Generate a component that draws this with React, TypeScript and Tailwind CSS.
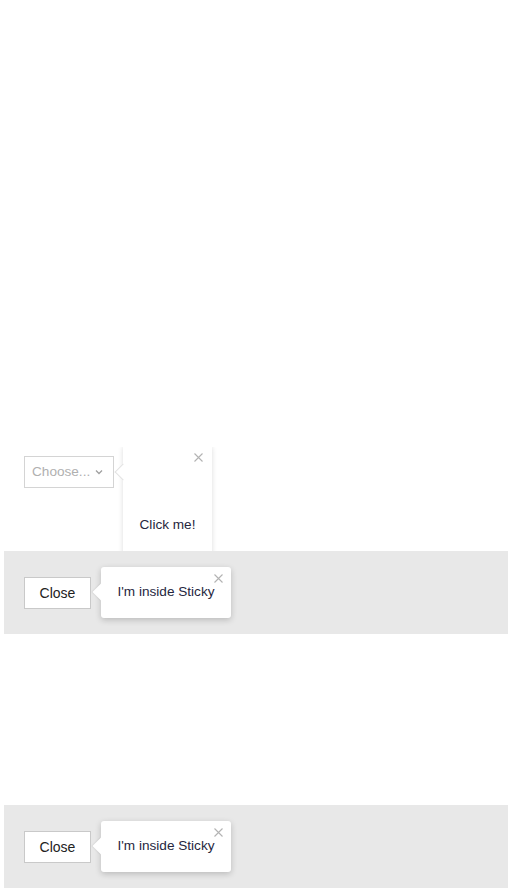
import React from 'react';

const font = { fontFamily: '"Liberation Sans", Arial, sans-serif' };

const CloseX: React.FC<{ className?: string }> = ({ className }) => (
  <svg className={className} width="9" height="9" viewBox="0 0 9 9" fill="none">
    <path d="M0.5 0.5L8.5 8.5M8.5 0.5L0.5 8.5" stroke="#b3b3b3" strokeWidth="1.1" />
  </svg>
);

const StickyBand: React.FC = () => (
  <div className="relative z-10 ml-[4px] h-[83px] bg-[#e8e8e8] flex items-start gap-[10px] pl-[20px]">
    <button className="mt-[26px] w-[67px] h-[32px] bg-white border border-[#c9c9c9] text-[14px] text-[#222]">
      Close
    </button>
    <div className="relative mt-[16px] w-[130px] h-[51px] bg-white rounded-[3px] shadow-[0_2px_6px_rgba(0,0,0,0.2)] flex items-center justify-center">
      <div className="absolute left-[-6px] top-[19px] w-[12px] h-[12px] bg-white rotate-45 shadow-[-1px_1px_1px_rgba(0,0,0,0.06)]" />
      <span className="relative text-[13.6px] text-[#262640]">I'm inside Sticky</span>
      <CloseX className="absolute right-[8px] top-[7px]" />
    </div>
  </div>
);

export default function App() {
  return (
    <div className="w-[508px] h-[892px] bg-white overflow-hidden" style={font}>
      <div className="h-[551px] flex items-end pl-[24px] pb-[63px]">
        <div className="relative">
          <div className="w-[90px] h-[32px] border border-[#d4d4d4] bg-white flex items-center pl-[7px] gap-[5px]">
            <span className="text-[13.6px] text-[#b0b0b0]">Choose...</span>
            <svg width="8" height="6" viewBox="0 0 8 6" fill="none">
              <path d="M1 1.5L4 4.5L7 1.5" stroke="#a0a0a0" strokeWidth="1.3" />
            </svg>
          </div>
          {/* popover anchored to the select */}
          <div className="absolute left-[99px] top-[-9px] w-[89px] h-[115px] bg-white shadow-[0_0_5px_rgba(0,0,0,0.14)] [clip-path:inset(0_-10px_-10px_-10px)]">
            <CloseX className="absolute right-[9px] top-[6px]" />
            <span className="absolute left-0 right-0 top-[68px] text-center text-[13.6px] text-[#262640]">Click me!</span>
          </div>
          <div className="absolute left-[93px] top-[10px] w-[12px] h-[12px] bg-white rotate-45 border-l border-b border-[#e2e2e2]" />
        </div>
      </div>
      <StickyBand />
      <div className="h-[171px]" />
      <StickyBand />
    </div>
  );
}
